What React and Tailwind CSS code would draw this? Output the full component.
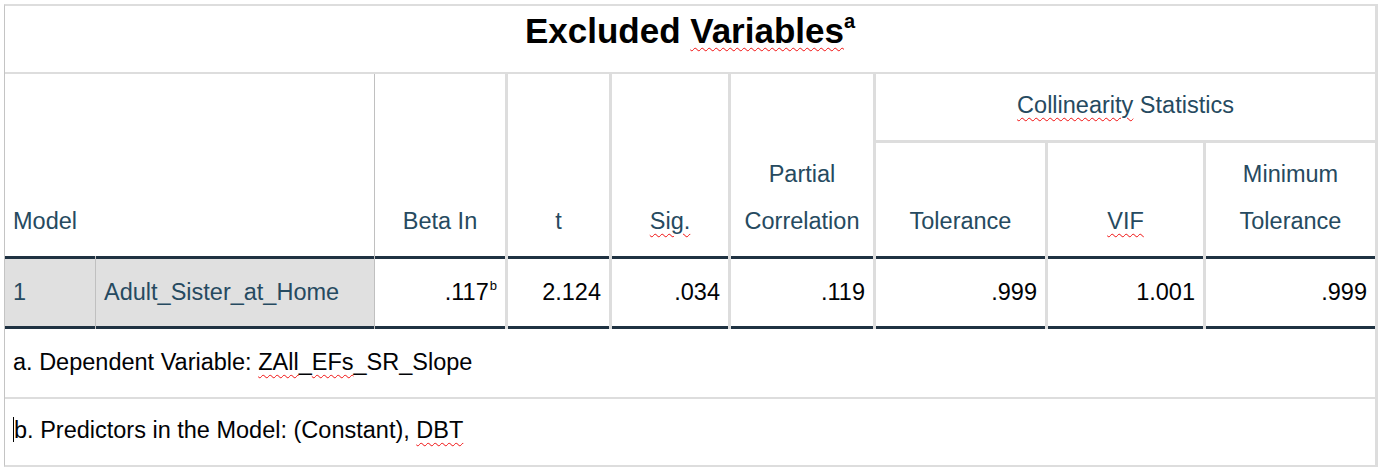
const spell = 'underline decoration-wavy decoration-[#f01010] decoration-1 underline-offset-[4px]'

function HeadCol({ w, last, children }) {
  return (
    <div className={`${w} ${last ? '' : 'border-r-[3px] border-r-[#dddddd]'} flex flex-col justify-end items-center text-center pb-[11px]`}>
      <div>{children}</div>
    </div>
  )
}

function DataCell({ w, divider = 'thick', gray, left, children }) {
  const div = {
    thin: 'border-r border-r-[#c0c0c0]',
    thick: 'border-r-[3px] border-r-[#dddddd]',
    none: '',
  }[divider]
  return (
    <div className={`${w} ${div}`}>
      <div
        className={`h-full border-y-[3px] border-[#1f3242] flex items-center ${
          left ? 'justify-start pl-[8px] text-[#264a60]' : 'justify-end pr-[8px] text-[#010205]'
        } ${gray ? 'bg-[#e0e0e0]' : 'bg-white'}`}
      >
        <span>{children}</span>
      </div>
    </div>
  )
}

export default function App() {
  return (
    <div className="min-h-screen bg-white pt-[4px] pl-[4px] font-['Liberation_Sans',Arial,sans-serif] text-[23.5px]">
      <div className="w-[1374px] border-t-2 border-b-2 border-r-[3px] border-l border-t-[#dddddd] border-b-[#dddddd] border-r-[#dddddd] border-l-[#c4c4c4]">
        {/* Title */}
        <div className="h-[68px] border-b-2 border-b-[#dddddd] pt-[11px] text-center text-[35px] font-bold leading-[28px] text-black">
          Excluded <span className={spell}>Variables</span>
          <sup className="text-[20px] -top-[0.75em]">a</sup>
        </div>

        {/* Header */}
        <div className="flex h-[182px] text-[#264a60] leading-[47px]">
          <div className="w-[370px] border-r border-r-[#c0c0c0] flex items-end pl-[8px] pb-[11px]">
            <span>Model</span>
          </div>
          <HeadCol w="w-[133px]">Beta In</HeadCol>
          <HeadCol w="w-[104px]">t</HeadCol>
          <HeadCol w="w-[119px]">
            <span className={spell}>Sig.</span>
          </HeadCol>
          <HeadCol w="w-[145px]">
            Partial
            <br />
            Correlation
          </HeadCol>
          <div className="w-[499px] flex flex-col">
            <div className="h-[69px] border-b-[3px] border-b-[#dddddd] flex items-center justify-center pb-[3px] leading-normal">
              <span>
                <span className={spell}>Collinearity</span> Statistics
              </span>
            </div>
            <div className="flex flex-1">
              <HeadCol w="w-[172px]">Tolerance</HeadCol>
              <HeadCol w="w-[158px]">
                <span className={spell}>VIF</span>
              </HeadCol>
              <HeadCol w="w-[169px]" last>
                Minimum
                <br />
                Tolerance
              </HeadCol>
            </div>
          </div>
        </div>

        {/* Data row */}
        <div className="flex h-[73px]">
          <DataCell w="w-[91px]" divider="thin" gray left>1</DataCell>
          <DataCell w="w-[279px]" divider="thin" gray left>Adult_Sister_at_Home</DataCell>
          <DataCell w="w-[133px]">
            .117<sup className="text-[13px] -top-[0.75em] ml-[1px]">b</sup>
          </DataCell>
          <DataCell w="w-[104px]">2.124</DataCell>
          <DataCell w="w-[119px]">.034</DataCell>
          <DataCell w="w-[145px]">.119</DataCell>
          <DataCell w="w-[172px]">.999</DataCell>
          <DataCell w="w-[158px]">1.001</DataCell>
          <DataCell w="w-[169px]" divider="none">.999</DataCell>
        </div>

        {/* Footnotes */}
        <div className="h-[70px] border-b-2 border-b-[#dddddd] flex items-center pl-[8px] text-[#010205]">
          <span>
            a. Dependent Variable: <span className={spell}>ZAll</span>_<span className={spell}>EFs</span>_SR_Slope
          </span>
        </div>
        <div className="h-[66px] flex items-center pl-[8px] pb-[2px] text-[#010205]">
          <span>
            <span className="inline-block w-px h-[25px] bg-black align-[-4px]" />
            b. Predictors in the Model: (Constant), <span className={spell}>DBT</span>
          </span>
        </div>
      </div>
    </div>
  )
}
